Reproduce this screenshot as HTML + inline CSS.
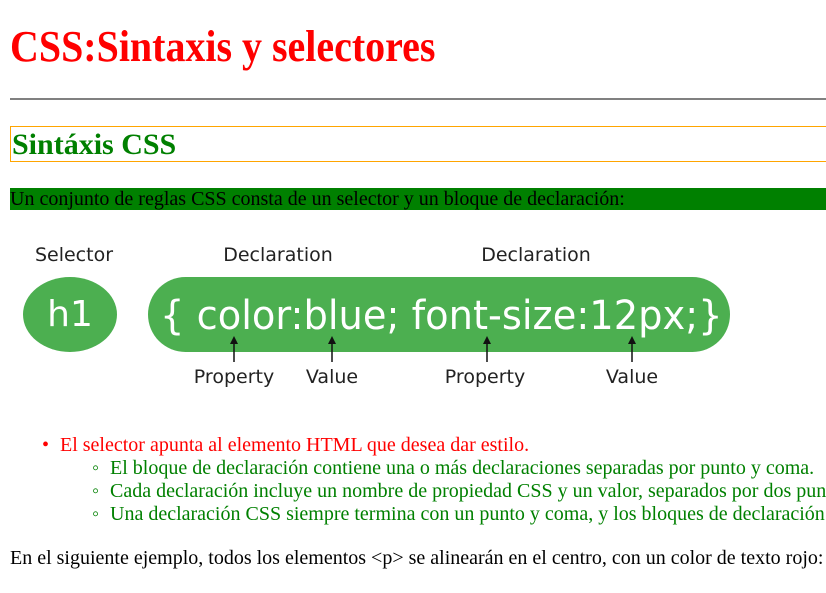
<!DOCTYPE html>
<html><head><meta charset="utf-8"><style>
html,body{margin:0;padding:0;background:#fff;width:826px;height:593px;overflow:hidden;position:relative}
#w{position:absolute;left:0;top:0;width:826px;height:593px;overflow:hidden}
.t{position:absolute;white-space:nowrap;font-family:"Liberation Serif",serif;line-height:1;transform-origin:0 0}
.s{position:absolute;white-space:nowrap;font-family:"DejaVu Sans","Liberation Sans",sans-serif;line-height:1;color:#222;transform:translateX(-50%)}
</style></head><body><div id="w">
<div class="t" style="left:10px;top:25px;font-size:44px;font-weight:bold;color:#f00;transform:scaleX(0.908)">CSS:Sintaxis y selectores</div>
<div style="position:absolute;left:10px;right:0;top:98px;height:2px;background:#808080"></div>
<div style="position:absolute;left:10px;width:830px;top:126px;height:34px;border:1px solid #ffa500"></div>
<div class="t" style="left:12px;top:130px;font-size:30px;font-weight:bold;color:#008000">Sintáxis CSS</div>
<div style="position:absolute;left:10px;right:0;top:188px;height:22px;background:#008000"></div>
<div class="t" style="left:10px;top:189px;font-size:20px;color:#000">Un conjunto de reglas CSS consta de un selector y un bloque de declaración:</div>

<div class="s" style="left:74px;top:246px;font-size:19px">Selector</div>
<div class="s" style="left:278px;top:246px;font-size:19px">Declaration</div>
<div class="s" style="left:536px;top:246px;font-size:19px">Declaration</div>
<div style="position:absolute;left:23px;top:277px;width:94px;height:75px;border-radius:50%;background:#4caf50"></div>
<div class="s" style="left:70px;top:297px;font-size:36px;color:#fff">h1</div>
<div style="position:absolute;left:148px;top:277px;width:582px;height:75px;border-radius:38px;background:#4caf50"></div>
<div class="t" style="left:160px;top:296px;font-size:40px;color:#fff;font-family:'DejaVu Sans',sans-serif;transform:scaleX(0.96)">{ color:blue; font-size:12px;}</div>
<svg style="position:absolute;left:0;top:0" width="826" height="593">
<g stroke="#111" stroke-width="1.5" fill="#111">
<line x1="234" y1="340" x2="234" y2="362"/><path d="M230,344 L234,336 L238,344Z" stroke="none"/>
<line x1="332" y1="340" x2="332" y2="362"/><path d="M328,344 L332,336 L336,344Z" stroke="none"/>
<line x1="487" y1="340" x2="487" y2="362"/><path d="M483,344 L487,336 L491,344Z" stroke="none"/>
<line x1="632" y1="340" x2="632" y2="362"/><path d="M628,344 L632,336 L636,344Z" stroke="none"/>
</g></svg>
<div class="s" style="left:234px;top:368px;font-size:19px">Property</div>
<div class="s" style="left:332px;top:368px;font-size:19px">Value</div>
<div class="s" style="left:485px;top:368px;font-size:19px">Property</div>
<div class="s" style="left:632px;top:368px;font-size:19px">Value</div>

<div class="t" style="left:42px;top:435px;font-size:20px;color:#f00">•</div>
<div class="t" style="left:60px;top:435px;font-size:20px;color:#f00">El selector apunta al elemento HTML que desea dar estilo.</div>
<div class="t" style="left:92px;top:458px;font-size:20px;color:#008000">◦</div>
<div class="t" style="left:110px;top:458px;font-size:20px;color:#008000">El bloque de declaración contiene una o más declaraciones separadas por punto y coma.</div>
<div class="t" style="left:92px;top:481px;font-size:20px;color:#008000">◦</div>
<div class="t" style="left:110px;top:481px;font-size:20px;color:#008000">Cada declaración incluye un nombre de propiedad CSS y un valor, separados por dos puntos.</div>
<div class="t" style="left:92px;top:504px;font-size:20px;color:#008000">◦</div>
<div class="t" style="left:110px;top:504px;font-size:20px;color:#008000">Una declaración CSS siempre termina con un punto y coma, y los bloques de declaración están rodeados por llaves.</div>
<div class="t" style="left:10px;top:548px;font-size:20px;color:#000">En el siguiente ejemplo, todos los elementos &lt;p&gt; se alinearán en el centro, con un color de texto rojo:</div>
</div></body></html>
